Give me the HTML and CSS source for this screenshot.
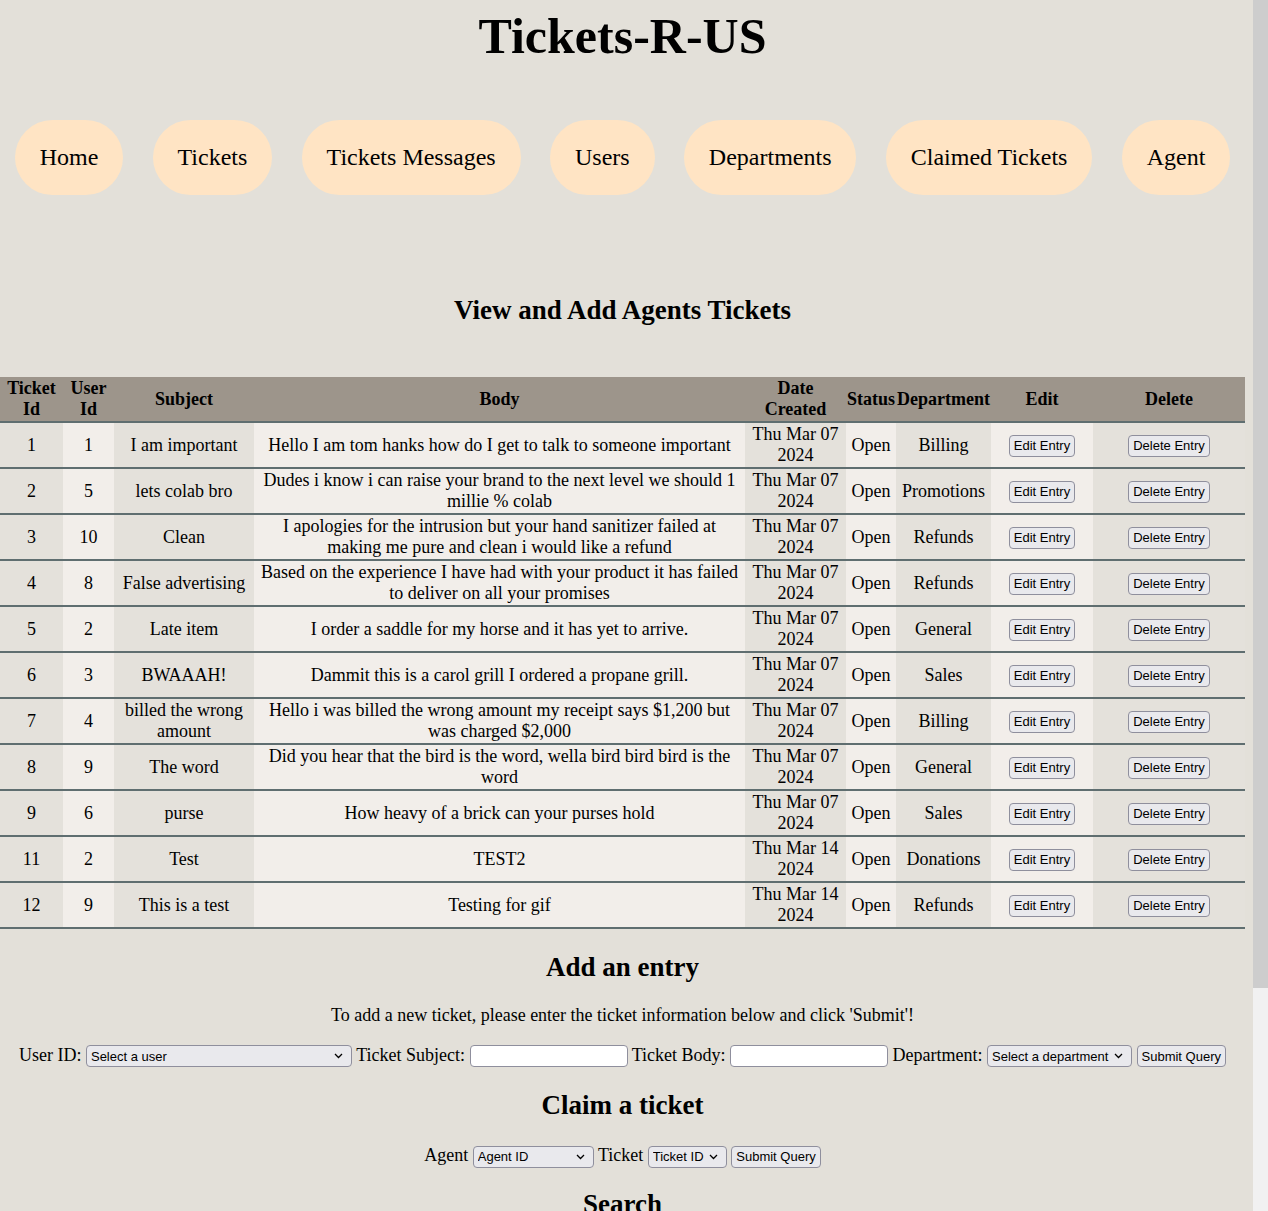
FILE: index.html
```html
<!DOCTYPE html>
<html lang="en">
<head>
<meta charset="utf-8">
<title>Tickets-R-US</title>
<link rel="stylesheet" href="styles.css">
</head>
<body>
<h1 class="site-title">Tickets-R-US</h1>
<nav class="main-nav">
  <a class="nav-pill" href="#">Home</a>
  <a class="nav-pill" href="#">Tickets</a>
  <a class="nav-pill" href="#">Tickets Messages</a>
  <a class="nav-pill" href="#">Users</a>
  <a class="nav-pill" href="#">Departments</a>
  <a class="nav-pill" href="#">Claimed Tickets</a>
  <a class="nav-pill" href="#">Agent</a>
</nav>

<h2 class="section-title view-title">View and Add Agents Tickets</h2>

<table class="tickets">
  <colgroup>
    <col class="c-id"><col class="c-user"><col class="c-subject"><col class="c-body"><col class="c-date"><col class="c-status"><col class="c-dept"><col class="c-edit"><col class="c-delete">
  </colgroup>
  <thead>
    <tr><th>Ticket Id</th><th>User Id</th><th>Subject</th><th>Body</th><th>Date Created</th><th>Status</th><th>Department</th><th>Edit</th><th>Delete</th></tr>
  </thead>
  <tbody>
    <tr><td>1</td><td>1</td><td>I am important</td><td>Hello I am tom hanks how do I get to talk to someone important</td><td>Thu Mar 07 2024</td><td>Open</td><td>Billing</td><td><button class="btn">Edit Entry</button></td><td><button class="btn">Delete Entry</button></td></tr>
    <tr><td>2</td><td>5</td><td>lets colab bro</td><td>Dudes i know i can raise your brand to the next level we should 1 millie % colab</td><td>Thu Mar 07 2024</td><td>Open</td><td>Promotions</td><td><button class="btn">Edit Entry</button></td><td><button class="btn">Delete Entry</button></td></tr>
    <tr><td>3</td><td>10</td><td>Clean</td><td>I apologies for the intrusion but your hand sanitizer failed at making me pure and clean i would like a refund</td><td>Thu Mar 07 2024</td><td>Open</td><td>Refunds</td><td><button class="btn">Edit Entry</button></td><td><button class="btn">Delete Entry</button></td></tr>
    <tr><td>4</td><td>8</td><td>False advertising</td><td>Based on the experience I have had with your product it has failed to deliver on all your promises</td><td>Thu Mar 07 2024</td><td>Open</td><td>Refunds</td><td><button class="btn">Edit Entry</button></td><td><button class="btn">Delete Entry</button></td></tr>
    <tr><td>5</td><td>2</td><td>Late item</td><td>I order a saddle for my horse and it has yet to arrive.</td><td>Thu Mar 07 2024</td><td>Open</td><td>General</td><td><button class="btn">Edit Entry</button></td><td><button class="btn">Delete Entry</button></td></tr>
    <tr><td>6</td><td>3</td><td>BWAAAH!</td><td>Dammit this is a carol grill I ordered a propane grill.</td><td>Thu Mar 07 2024</td><td>Open</td><td>Sales</td><td><button class="btn">Edit Entry</button></td><td><button class="btn">Delete Entry</button></td></tr>
    <tr><td>7</td><td>4</td><td>billed the wrong amount</td><td>Hello i was billed the wrong amount my receipt says $1,200 but was charged $2,000</td><td>Thu Mar 07 2024</td><td>Open</td><td>Billing</td><td><button class="btn">Edit Entry</button></td><td><button class="btn">Delete Entry</button></td></tr>
    <tr><td>8</td><td>9</td><td>The word</td><td>Did you hear that the bird is the word, wella bird bird bird is the word</td><td>Thu Mar 07 2024</td><td>Open</td><td>General</td><td><button class="btn">Edit Entry</button></td><td><button class="btn">Delete Entry</button></td></tr>
    <tr><td>9</td><td>6</td><td>purse</td><td>How heavy of a brick can your purses hold</td><td>Thu Mar 07 2024</td><td>Open</td><td>Sales</td><td><button class="btn">Edit Entry</button></td><td><button class="btn">Delete Entry</button></td></tr>
    <tr><td>11</td><td>2</td><td>Test</td><td>TEST2</td><td>Thu Mar 14 2024</td><td>Open</td><td>Donations</td><td><button class="btn">Edit Entry</button></td><td><button class="btn">Delete Entry</button></td></tr>
    <tr><td>12</td><td>9</td><td>This is a test</td><td>Testing for gif</td><td>Thu Mar 14 2024</td><td>Open</td><td>Refunds</td><td><button class="btn">Edit Entry</button></td><td><button class="btn">Delete Entry</button></td></tr>
  </tbody>
</table>

<h2 class="section-title add-title">Add an entry</h2>
<p class="intro">To add a new ticket, please enter the ticket information below and click 'Submit'!</p>
<form class="entry-form">
  <label>User ID:</label> <select class="ctl sel-user"><option>Select a user</option></select>
  <label>Ticket Subject:</label> <input class="ctl txt" type="text">
  <label>Ticket Body:</label> <input class="ctl txt" type="text">
  <label>Department:</label> <select class="ctl sel-dept"><option>Select a department</option></select>
  <button class="btn" type="button">Submit Query</button>
</form>

<h2 class="section-title claim-title">Claim a ticket</h2>
<form class="entry-form claim-form">
  <label>Agent</label> <select class="ctl sel-agent"><option>Agent ID</option></select>
  <label>Ticket</label> <select class="ctl sel-ticket"><option>Ticket ID</option></select>
  <button class="btn" type="button">Submit Query</button>
</form>

<h2 class="section-title search-title">Search</h2>
<form class="entry-form search-form">
  <label>Search by subject:</label> <input class="ctl txt" type="text">
  <button class="btn" type="button">Submit Query</button>
</form>

<div class="scrollbar" aria-hidden="true"><div class="scrollbar-thumb"></div></div>
</body>
</html>
```
FILE: styles.css
```css
html {
  background: #e3e0d9;
}

body {
  margin: 0 23px 0 0;
  padding-bottom: 200px;
  background: #e3e0d9;
  color: #000;
  font-family: "Liberation Serif", "Times New Roman", serif;
  font-size: 18px;
  line-height: 1.15;
}

.site-title {
  margin: 8px 0 0;
  font-size: 50px;
  font-weight: bold;
  line-height: 1.15;
  text-align: center;
}

.main-nav {
  display: flex;
  justify-content: space-around;
  margin-top: 54px;
}

.nav-pill {
  padding: 24px 25px;
  border-radius: 38px;
  background: #ffe4c4;
  color: #000;
  font-size: 24px;
  line-height: 27.6px;
  text-decoration: none;
}

.section-title {
  margin: 0;
  font-size: 27px;
  font-weight: bold;
  line-height: 31px;
  text-align: center;
}

.view-title {
  margin-top: 100px;
  margin-bottom: 51px;
}

.tickets {
  width: 100%;
  border-collapse: collapse;
  table-layout: fixed;
}

.c-id { width: 63px; }
.c-user { width: 51px; }
.c-subject { width: 140px; }
.c-body { width: 491px; }
.c-date { width: 101px; }
.c-status { width: 50px; }
.c-dept { width: 95px; }
.c-edit { width: 102px; }
.c-delete { width: 152px; }

.tickets th,
.tickets td {
  padding: 1px;
  text-align: center;
  vertical-align: middle;
  border-bottom: 2px solid #5f6e70;
  line-height: 21px;
}

.tickets th {
  background: #9d958b;
  font-weight: bold;
}

.tickets td:nth-child(odd) {
  background: #e4e1db;
}

.tickets td:nth-child(even) {
  background: #f2eeea;
}

.btn {
  box-sizing: border-box;
  height: 22px;
  padding: 0 4px;
  border: 1px solid #8f8f9d;
  border-radius: 4px;
  background: #e9e9ed;
  color: #000;
  font-family: "Liberation Sans", Arial, sans-serif;
  font-size: 13px;
  vertical-align: middle;
}

.add-title {
  margin-top: 23px;
}

.intro {
  margin: 22px 0 0;
  text-align: center;
}

.entry-form {
  margin-top: 17px;
  text-align: center;
  line-height: 24px;
}

.entry-form .btn {
  vertical-align: baseline;
}

.ctl {
  box-sizing: border-box;
  height: 22px;
  border: 1px solid #8f8f9d;
  border-radius: 4px;
  color: #000;
  font-family: "Liberation Sans", Arial, sans-serif;
  font-size: 13px;
  vertical-align: baseline;
}

.txt {
  width: 158px;
  padding: 0 4px;
  background: #fff;
}

select.ctl {
  appearance: none;
  -webkit-appearance: none;
  padding: 0 20px 0 4px;
  background: #e9e9ed url("data:image/svg+xml,%3Csvg xmlns='http://www.w3.org/2000/svg' width='9' height='6' viewBox='0 0 9 6'%3E%3Cpath d='M1 1l3.5 3.5L8 1' fill='none' stroke='%23000' stroke-width='1.3'/%3E%3C/svg%3E") no-repeat right 8px center;
}

.sel-user { width: 266px; }
.sel-dept { width: 145px; }
.sel-agent { width: 121px; }
.sel-ticket { width: 79px; }

.claim-title {
  margin-top: 23px;
}

.claim-form {
  margin-top: 22px;
}

.search-title {
  margin-top: 21px;
}

.scrollbar {
  position: fixed;
  top: 0;
  right: 0;
  width: 15px;
  height: 100vh;
  background: #f1f1f1;
}

.scrollbar-thumb {
  height: 988px;
  background: #cdcdcd;
}
```
